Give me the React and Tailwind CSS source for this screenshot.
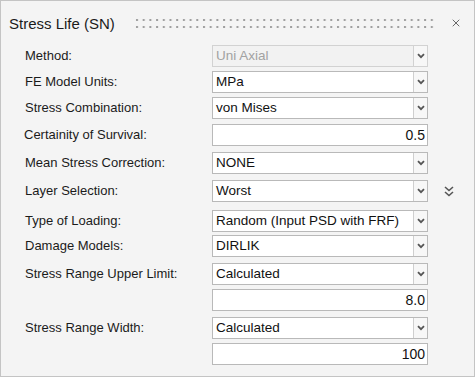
import { X } from 'lucide-react'

const rows = [
  { label: 'Method:', kind: 'combo', value: 'Uni Axial', disabled: true, mt: 'mt-[0px]' },
  { label: 'FE Model Units:', kind: 'combo', value: 'MPa', mt: 'mt-[4px]' },
  { label: 'Stress Combination:', kind: 'combo', value: 'von Mises', mt: 'mt-[4px]' },
  { label: 'Certainity of Survival:', kind: 'text', value: '0.5', mt: 'mt-[5px]', shift: true },
  { label: 'Mean Stress Correction:', kind: 'combo', value: 'NONE', mt: 'mt-[6px]' },
  { label: 'Layer Selection:', kind: 'combo', value: 'Worst', mt: 'mt-[6px]', more: true },
  { label: 'Type of Loading:', kind: 'combo', value: 'Random (Input PSD with FRF)', mt: 'mt-[8px]' },
  { label: 'Damage Models:', kind: 'combo', value: 'DIRLIK', mt: 'mt-[3px]' },
  { label: 'Stress Range Upper Limit:', kind: 'combo', value: 'Calculated', mt: 'mt-[6px]' },
  { label: '', kind: 'text', value: '8.0', mt: 'mt-[4px]' },
  { label: 'Stress Range Width:', kind: 'combo', value: 'Calculated', mt: 'mt-[6px]' },
  { label: '', kind: 'text', value: '100', mt: 'mt-[4px]' },
]

export default function App() {
  return (
    <div className="w-[476px] h-[378px] bg-white font-['Liberation_Sans',Arial,sans-serif] text-[13px] text-[#1b1b1b]">
      <div className="w-[475px] h-[377px] border border-[#c4c4c4] bg-[#f4f4f4]">
        {/* Header */}
        <div className="flex items-center h-[44px] pl-[8px] pr-[12px]">
          <span className="text-[15px] leading-none">Stress Life (SN)</span>
          <div className="flex-1 ml-[20px] mr-[14px] h-[10px]">
            <svg width="100%" height="10">
              <defs>
                <pattern id="grip" width="6.7" height="7" patternUnits="userSpaceOnUse">
                  <rect x="1" y="1" width="2" height="2" fill="#9e9e9e" />
                </pattern>
              </defs>
              <rect width="100%" height="10" fill="url(#grip)" />
            </svg>
          </div>
          <X size={12} strokeWidth={1.6} className="text-[#444]" />
        </div>

        {/* Fields */}
        <div className="flex flex-col">
          {rows.map((r, i) => (
            <div key={i} className={`flex items-center h-[22px] ${r.mt}`}>
              <span className={`w-[211px] ${r.shift ? 'pl-[23px]' : 'pl-[24px]'} whitespace-nowrap`}>
                {r.label}
              </span>
              {r.kind === 'combo' ? (
                <Combo value={r.value} disabled={r.disabled} />
              ) : (
                <div className="w-[216px] h-[22px] bg-white border border-[#b9b9b9] flex items-center justify-end pr-[2px] text-[14px] text-[#111]">
                  {r.value}
                </div>
              )}
              {r.more && (
                <svg width="12" height="13" viewBox="0 0 12 13" className="ml-[15px]">
                  <path d="M2 2 L6 5.5 L10 2 M2 7 L6 10.5 L10 7" fill="none" stroke="#555" strokeWidth="1.6" />
                </svg>
              )}
            </div>
          ))}
        </div>
      </div>
    </div>
  )
}

function Combo({ value, disabled }) {
  return (
    <div
      className={`w-[216px] h-[22px] flex border ${
        disabled ? 'border-[#d2d2d2] bg-[#f2f2f2] text-[#a2a2a2]' : 'border-[#b9b9b9] bg-white text-[#111]'
      }`}
    >
      <div className="flex-1 flex items-center pl-[3px] text-[13.5px] whitespace-nowrap overflow-hidden">{value}</div>
      <div className={`w-[14px] flex items-center justify-center border-l ${disabled ? 'border-[#d2d2d2]' : 'border-[#cfcfcf]'} bg-[#f7f7f7]`}>
        <svg width="8" height="6" viewBox="0 0 8 6">
          <path d="M1 1.2 L4 4.2 L7 1.2" fill="none" stroke="#555" strokeWidth="1.8" />
        </svg>
      </div>
    </div>
  )
}
